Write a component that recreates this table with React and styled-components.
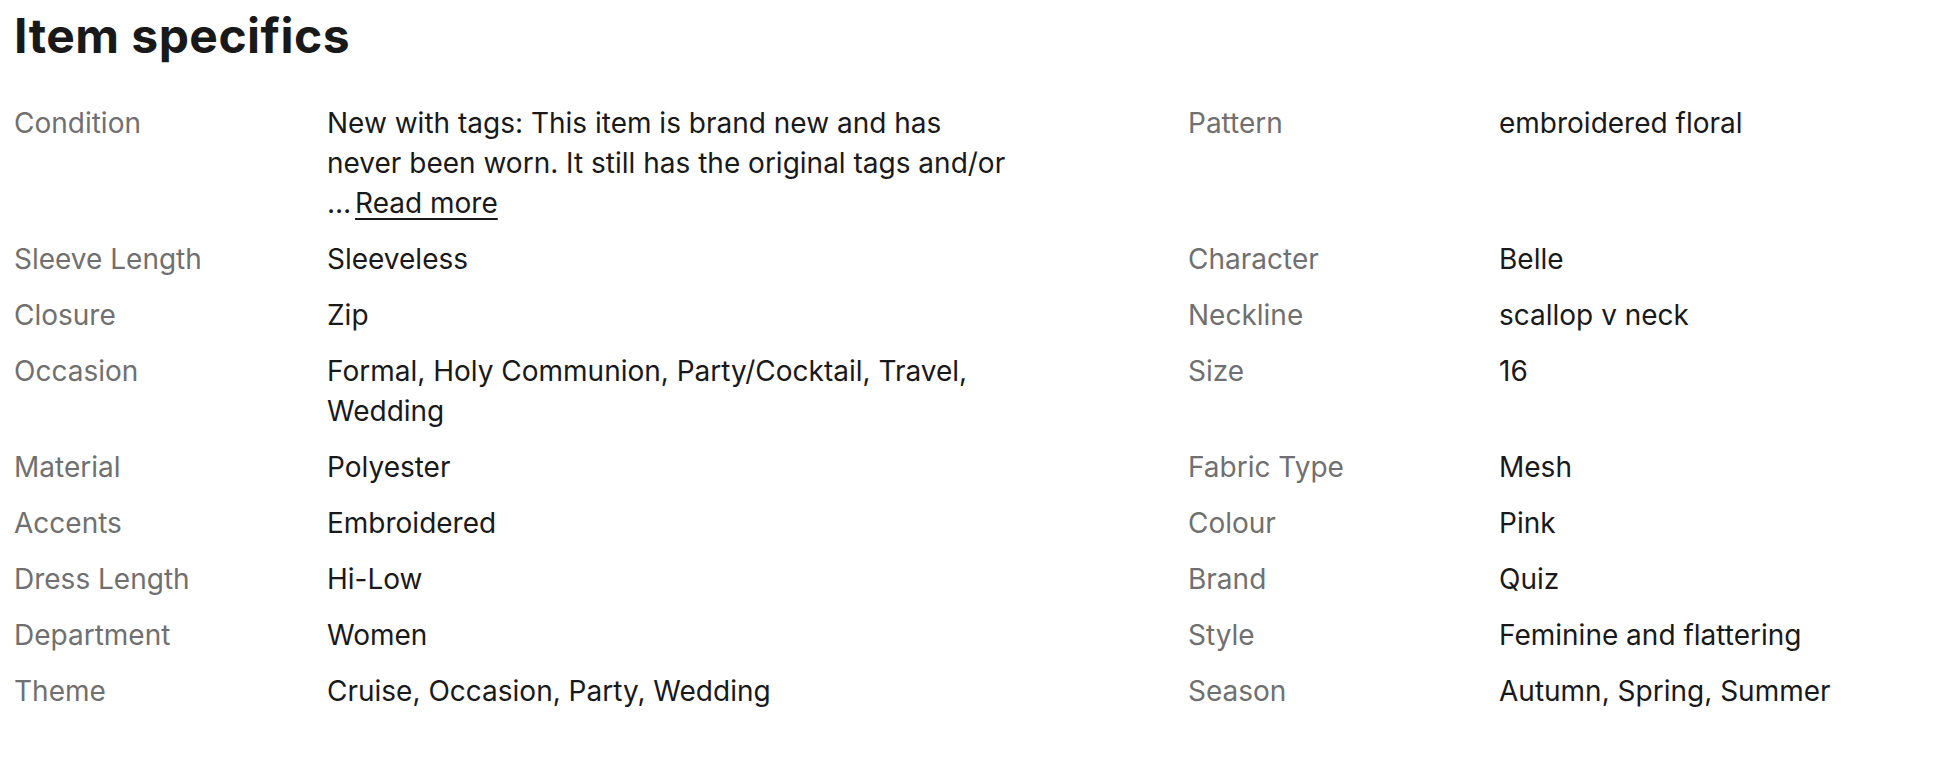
import styled, { createGlobalStyle } from "styled-components";

const GlobalStyle = createGlobalStyle`
  body {
    margin: 0;
    background: #ffffff;
    font-family: Inter, "Liberation Sans", Arial, sans-serif;
    color: #191919;
  }
`;

const Section = styled.section`
  padding: 8px 14px 0 14px;
`;

const Title = styled.h2`
  margin: 0 0 39px 0;
  font-size: 48px;
  line-height: 56px;
  font-weight: 700;
  color: #191919;
  letter-spacing: 0.45px;
`;

const Rows = styled.div`
  display: flex;
  flex-direction: column;
  gap: 16px;
`;

const Row = styled.div`
  display: grid;
  grid-template-columns: 313px 861px 311px 1fr;
  align-items: start;
`;

const Label = styled.div`
  font-size: 28px;
  line-height: 40px;
  color: #707070;
`;

const Value = styled.div`
  font-size: 28px;
  line-height: 40px;
  color: #191919;
  max-width: ${(p) => (p.$wide ? "none" : "688px")};
`;

const Ellipsis = styled.span`
  letter-spacing: -1px;
  margin-right: -3px;
`;

const ReadMore = styled.a`
  color: #191919;
  text-decoration: underline;
  text-decoration-thickness: 2px;
  text-underline-offset: 5px;
  cursor: pointer;
`;

const specs = [
  ["Condition", "condition", "Pattern", "embroidered floral"],
  ["Sleeve Length", "Sleeveless", "Character", "Belle"],
  ["Closure", "Zip", "Neckline", "scallop v neck"],
  [
    "Occasion",
    "Formal, Holy Communion, Party/Cocktail, Travel, Wedding",
    "Size",
    "16",
  ],
  ["Material", "Polyester", "Fabric Type", "Mesh"],
  ["Accents", "Embroidered", "Colour", "Pink"],
  ["Dress Length", "Hi-Low", "Brand", "Quiz"],
  ["Department", "Women", "Style", "Feminine and flattering"],
  ["Theme", "Cruise, Occasion, Party, Wedding", "Season", "Autumn, Spring, Summer"],
];

const ConditionText = () => (
  <>
    <div>
      New with tags: This item is brand new and has never been worn. It still
      has the original tags and/or
    </div>
    <div>
      <Ellipsis>…</Ellipsis> <ReadMore>Read more</ReadMore>
    </div>
  </>
);

const App = () => {
  return (
    <>
      <GlobalStyle />
      <Section>
        <Title>Item specifics</Title>
        <Rows>
          {specs.map(([l1, v1, l2, v2]) => (
            <Row key={l1}>
              <Label>{l1}</Label>
              <Value>{v1 === "condition" ? <ConditionText /> : v1}</Value>
              <Label>{l2}</Label>
              <Value $wide>{v2}</Value>
            </Row>
          ))}
        </Rows>
      </Section>
    </>
  );
};

export default App;
